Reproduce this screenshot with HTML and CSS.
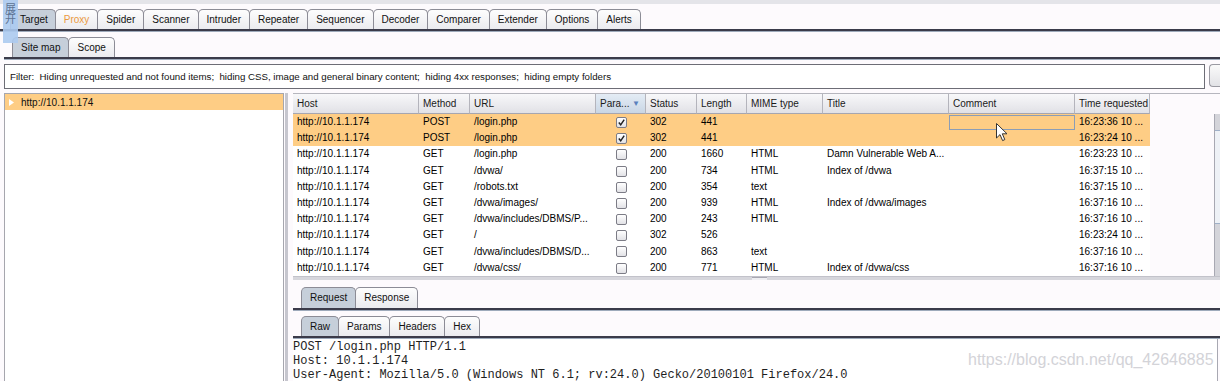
FILE: index.html
```html
<!DOCTYPE html>
<html>
<head>
  <meta charset="utf-8">
  <title>Burp Suite - Target</title>
  <link rel="stylesheet" href="styles.css">
</head>
<body>
  <div class="app">
    <div class="topstrip"></div>

    <div class="tabbar maintabs">
      <div class="tab on">Target</div>
      <div class="tab proxy">Proxy</div>
      <div class="tab">Spider</div>
      <div class="tab">Scanner</div>
      <div class="tab">Intruder</div>
      <div class="tab">Repeater</div>
      <div class="tab">Sequencer</div>
      <div class="tab">Decoder</div>
      <div class="tab">Comparer</div>
      <div class="tab">Extender</div>
      <div class="tab">Options</div>
      <div class="tab">Alerts</div>
    </div>

    <div class="target">
      <div class="tabbar subtabs">
        <div class="tab on">Site map</div>
        <div class="tab">Scope</div>
      </div>

      <div class="filterrow">
        <div class="filter">Filter:  Hiding unrequested and not found items;  hiding CSS, image and general binary content;  hiding 4xx responses;  hiding empty folders</div>
        <div class="filterbtn"></div>
      </div>

      <div class="split">
        <div class="tree">
          <div class="node">
            <svg class="arrow" width="5" height="7" viewBox="0 0 5 7"><path d="M0 0L5 3.5L0 7Z" fill="#fff"/></svg>
            <span>http://10.1.1.174</span>
          </div>
        </div>

        <div class="divider"></div>

        <div class="right">
          <div class="tablewrap">
            <table class="items">
              <colgroup>
                <col style="width:126px"><col style="width:51px"><col style="width:126px"><col style="width:50px"><col style="width:51px">
                <col style="width:50px"><col style="width:76px"><col style="width:126px"><col style="width:126px"><col style="width:75px">
              </colgroup>
              <thead>
                <tr>
                  <th>Host</th><th>Method</th><th>URL</th>
                  <th class="sorted">Para...<span class="sortarrow">&#9660;</span></th>
                  <th>Status</th><th>Length</th><th>MIME type</th><th>Title</th><th>Comment</th><th>Time requested</th>
                </tr>
              </thead>
              <tbody>
                <tr class="sel">
                  <td>http://10.1.1.174</td><td>POST</td><td>/login.php</td>
                  <td class="c"><span class="cb"><svg width="9" height="9" viewBox="0 0 9 9"><path d="M1.8 4.6L3.7 6.8L7.2 1.6" fill="none" stroke="#222" stroke-width="1.5"/></svg></span></td>
                  <td>302</td><td>441</td><td></td><td></td>
                  <td class="edit"><div class="editbox"></div></td><td>16:23:36 10 ...</td>
                </tr>
                <tr class="sel">
                  <td>http://10.1.1.174</td><td>POST</td><td>/login.php</td>
                  <td class="c"><span class="cb"><svg width="9" height="9" viewBox="0 0 9 9"><path d="M1.8 4.6L3.7 6.8L7.2 1.6" fill="none" stroke="#222" stroke-width="1.5"/></svg></span></td>
                  <td>302</td><td>441</td><td></td><td></td><td></td><td>16:23:24 10 ...</td>
                </tr>
                <tr>
                  <td>http://10.1.1.174</td><td>GET</td><td>/login.php</td><td class="c"><span class="cb"></span></td>
                  <td>200</td><td>1660</td><td>HTML</td><td>Damn Vulnerable Web A...</td><td></td><td>16:23:23 10 ...</td>
                </tr>
                <tr>
                  <td>http://10.1.1.174</td><td>GET</td><td>/dvwa/</td><td class="c"><span class="cb"></span></td>
                  <td>200</td><td>734</td><td>HTML</td><td>Index of /dvwa</td><td></td><td>16:37:15 10 ...</td>
                </tr>
                <tr>
                  <td>http://10.1.1.174</td><td>GET</td><td>/robots.txt</td><td class="c"><span class="cb"></span></td>
                  <td>200</td><td>354</td><td>text</td><td></td><td></td><td>16:37:15 10 ...</td>
                </tr>
                <tr>
                  <td>http://10.1.1.174</td><td>GET</td><td>/dvwa/images/</td><td class="c"><span class="cb"></span></td>
                  <td>200</td><td>939</td><td>HTML</td><td>Index of /dvwa/images</td><td></td><td>16:37:16 10 ...</td>
                </tr>
                <tr>
                  <td>http://10.1.1.174</td><td>GET</td><td>/dvwa/includes/DBMS/P...</td><td class="c"><span class="cb"></span></td>
                  <td>200</td><td>243</td><td>HTML</td><td></td><td></td><td>16:37:16 10 ...</td>
                </tr>
                <tr>
                  <td>http://10.1.1.174</td><td>GET</td><td>/</td><td class="c"><span class="cb"></span></td>
                  <td>302</td><td>526</td><td></td><td></td><td></td><td>16:23:24 10 ...</td>
                </tr>
                <tr>
                  <td>http://10.1.1.174</td><td>GET</td><td>/dvwa/includes/DBMS/D...</td><td class="c"><span class="cb"></span></td>
                  <td>200</td><td>863</td><td>text</td><td></td><td></td><td>16:37:16 10 ...</td>
                </tr>
                <tr>
                  <td>http://10.1.1.174</td><td>GET</td><td>/dvwa/css/</td><td class="c"><span class="cb"></span></td>
                  <td>200</td><td>771</td><td>HTML</td><td>Index of /dvwa/css</td><td></td><td>16:37:16 10 ...</td>
                </tr>
              </tbody>
            </table>
            <div class="filler"></div>
            <div class="vscroll"><div class="thumb"></div></div>
          </div>

          <div class="hsplit"><div class="hline"><span class="grip"></span></div></div>

          <div class="tabbar lowtabs">
            <div class="tab on">Request</div>
            <div class="tab">Response</div>
          </div>
          <div class="tabbar lowtabs rawtabs">
            <div class="tab on">Raw</div>
            <div class="tab">Params</div>
            <div class="tab">Headers</div>
            <div class="tab">Hex</div>
          </div>
          <pre class="raw">POST /login.php HTTP/1.1
Host: 10.1.1.174
User-Agent: Mozilla/5.0 (Windows NT 6.1; rv:24.0) Gecko/20100101 Firefox/24.0</pre>
        </div>
      </div>
    </div>

    <!-- things floating over the window -->
    <div class="zh">展<br>开</div>
    <svg class="cursor" width="13" height="20" viewBox="0 0 13 20">
      <path d="M0.5 0.5L0.5 15L4 11.6L6.6 17.6L8.8 16.6L6.3 10.8L11 10.8Z" fill="#fff" stroke="#333" stroke-width="1"/>
    </svg>
    <div class="watermark">https://blog.csdn.net/qq_42646885</div>
  </div>
</body>
</html>
```

FILE: styles.css
```css
body {
  margin: 0;
  background-color: #fdfafd;
  font-family: "Liberation Sans", Arial, sans-serif;
  font-size: 10px;
  color: #111;
  overflow: hidden;
}
.app {
  position: relative;
  width: 1220px;
  height: 381px;
  overflow: hidden;
}
.topstrip {
  height: 4px;
  background-color: #e4e4e9;
  margin-bottom: 5px;
}

/* tabs */
.tabbar {
  display: flex;
  align-items: flex-end;
  border-bottom: 2px solid #3b3b4a;
  box-shadow: 0 1px 0 #9eaabb;
}
.tab {
  height: 19px;
  line-height: 19px;
  padding: 0 8px;
  border: 1px solid #8c8c96;
  border-bottom: none;
  border-radius: 5px 5px 0 0;
  background: linear-gradient(#fdfdfd, #ebebef);
  margin-right: -1px;
  color: #111;
  white-space: nowrap;
}
.tab.on {
  background: #c6cfda;
}
.tab.proxy {
  color: #eb9a3e;
}
.maintabs {
  padding-left: 10px;
}
.maintabs .tab.on {
  padding-left: 9px;
  padding-right: 7px;
}
.target {
  padding-left: 4px;
  margin-top: 6px;
}
.subtabs {
  padding-left: 8px;
}

/* filter */
.filterrow {
  display: flex;
  margin-top: 5px;
}
.filter {
  flex: 1;
  height: 23px;
  line-height: 23px;
  border: 1px solid #6d6d76;
  background-color: #fff;
  padding-left: 5px;
  font-size: 9.7px;
  white-space: pre;
}
.filterbtn {
  width: 10px;
  height: 21px;
  margin-left: 4px;
  border: 1px solid #9a9aa2;
  border-right: none;
  border-radius: 4px 0 0 4px;
  background: linear-gradient(#fafafa, #e2e2e6);
}

/* main split */
.split {
  display: flex;
  margin-top: 4px;
  height: 300px;
}
.tree {
  width: 278px;
  border: 1px solid #a6a6ae;
  background-color: #fff;
}
.node {
  display: flex;
  align-items: center;
  height: 16px;
  background-color: #fecd85;
  padding-left: 4px;
}
.node .arrow {
  margin-right: 7px;
}
.divider {
  width: 3px;
  margin: 0 5px 0 1px;
  background-color: #c6c6ce;
}
.right {
  flex: 1;
  display: flex;
  flex-direction: column;
}

/* items table */
.tablewrap {
  display: flex;
  border-top: 1px solid #b6b6be;
  border-bottom: 1px solid #c2c2ca;
  height: 182px;
  overflow: hidden;
}
.items {
  table-layout: fixed;
  width: 857px;
  border-collapse: separate;
  border-spacing: 0;
  background-color: #fff;
}
.items th {
  line-height: 19px;
  padding: 0 0 0 4px;
  border-right: 1px solid #b4b4bc;
  border-bottom: 1px solid #a6a6b0;
  background: linear-gradient(#f8f8fa, #e1e1e6);
  text-align: left;
  font-weight: normal;
  color: #1a1a1a;
  white-space: nowrap;
  overflow: hidden;
}
.items th.sorted {
  background: linear-gradient(#e4ecf5, #c9d6e5);
}
.sortarrow {
  float: right;
  margin-right: 5px;
  font-size: 8px;
  color: #5a80bd;
}
.items td {
  height: 16.2px;
  line-height: 16px;
  padding: 0 0 0 4px;
  white-space: nowrap;
  overflow: hidden;
  color: #000;
}
.items td.c {
  padding: 0;
  text-align: center;
}
.items tr.sel td {
  background-color: #fecd85;
}
.cb {
  display: inline-block;
  width: 9px;
  height: 9px;
  border: 1px solid #7c7c86;
  border-radius: 2px;
  background: linear-gradient(#ffffff, #e2e2e6);
  vertical-align: middle;
  margin-left: 1px;
}
.cb svg {
  display: block;
}
.items td.edit {
  padding: 0;
}
.editbox {
  height: 15px;
  border: 1px solid #8b9db6;
  box-sizing: border-box;
}
.filler {
  flex: 1;
}
.vscroll {
  width: 5px;
  margin-top: 20px;
  border-left: 1px solid #a8a8b2;
  background-color: #d4d4da;
}
.vscroll .thumb {
  height: 92px;
  margin-top: 16px;
  background-color: #eef1f6;
  border-top: 1px solid #9fb0c8;
  border-bottom: 1px solid #9fb0c8;
}

/* splitter */
.hsplit {
  height: 10px;
}
.hline {
  display: flex;
  height: 3px;
  background-color: #d6d6dc;
}
.grip {
  width: 15px;
  margin-left: 459px;
  background-color: #eeeef2;
  border-top: 1px solid #a8a8b2;
}

/* request editor */
.lowtabs {
  padding-left: 8px;
}
.lowtabs .tab {
  height: 20px;
  line-height: 20px;
}
.rawtabs {
  margin-top: 6px;
}
.rawtabs .tab {
  height: 19px;
  line-height: 19px;
}
.raw {
  flex: 1;
  margin: 1px 2px 0 0;
  padding: 1px 0 0 0;
  background-color: #fff;
  border-right: 1px solid #a8a8b2;
  font-family: "Liberation Mono", "Courier New", monospace;
  font-size: 12px;
  line-height: 14px;
  color: #1e1e1e;
}

/* overlays */
.zh {
  position: absolute;
  left: 3px;
  top: 0;
  width: 15px;
  height: 40px;
  padding-top: 3px;
  background-color: rgba(172, 202, 240, 0.9);
  color: #5d7393;
  font-family: "Noto Sans CJK SC", sans-serif;
  font-size: 11px;
  line-height: 10px;
  text-align: center;
}
.cursor {
  position: absolute;
  left: 996px;
  top: 123px;
}
.watermark {
  position: absolute;
  left: 968px;
  top: 351px;
  font-family: "Liberation Sans", Arial, sans-serif;
  font-size: 16px;
  line-height: 18px;
  color: #d3d3d8;
}
```
